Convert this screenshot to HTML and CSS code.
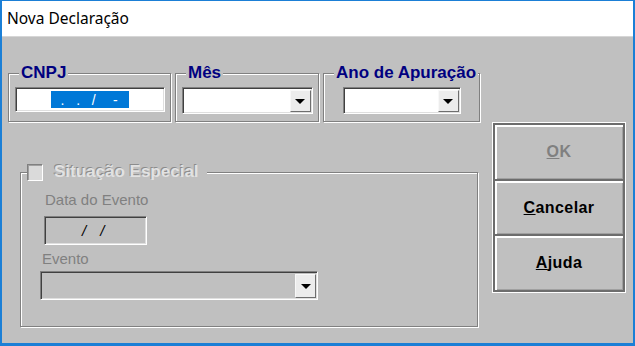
FILE: index.html
```html
<!DOCTYPE html>
<html lang="pt-BR">
<head>
  <meta charset="UTF-8">
  <title>Nova Declaração</title>
  <link rel="stylesheet" href="styles.css">
</head>
<body>
  <div class="window">
    <div class="titlebar">Nova Declaração</div>
    <div class="client">
      <div class="main">
        <div class="top-row">
          <div class="group group-cnpj">
            <span class="group-label">CNPJ</span>
            <div class="field edit cnpj">
              <span class="sel"><i>.</i><i>.</i><i class="slash">/</i><i>-</i></span>
            </div>
          </div>
          <div class="group group-mes">
            <span class="group-label">Mês</span>
            <div class="field combo combo-mes">
              <span class="combo-btn"><span class="arrow"></span></span>
            </div>
          </div>
          <div class="group group-ano">
            <span class="group-label">Ano de Apuração</span>
            <div class="field combo combo-ano">
              <span class="combo-btn"><span class="arrow"></span></span>
            </div>
          </div>
        </div>

        <div class="group group-special">
          <div class="check-label">
            <span class="checkbox"></span>
            <span class="disabled-text">Situação Especial</span>
          </div>
          <div class="caption caption-data">Data do Evento</div>
          <div class="field edit date">/ /</div>
          <div class="caption caption-evento">Evento</div>
          <div class="field combo disabled combo-evento">
            <span class="combo-btn"><span class="arrow"></span></span>
          </div>
        </div>
      </div>

      <div class="buttons">
        <div class="btn btn-disabled"><u>O</u>K</div>
        <div class="btn"><u>C</u>ancelar</div>
        <div class="btn"><u>A</u>juda</div>
      </div>
    </div>
  </div>
</body>
</html>
```

FILE: styles.css
```css
body {
  margin: 0;
  background: #c0c0c0;
}
.window {
  width: 635px;
  height: 346px;
  box-sizing: border-box;
  border: solid #1b7fd6;
  border-width: 1px 2px 3px;
  display: flex;
  flex-direction: column;
  background: #c0c0c0;
}
.titlebar {
  height: 36px;
  box-sizing: border-box;
  background: #fff;
  border-bottom: 1px solid #d6d6d6;
  padding: 6px 0 0 5px;
  font: 15.5px "Noto Sans", sans-serif;
  color: #000;
}
.client {
  flex: 1;
  display: flex;
  padding: 36px 7px 0 6px;
}
.main {
  width: 472px;
}
.top-row {
  display: flex;
  gap: 4px;
}

/* etched group boxes */
.group {
  position: relative;
  box-sizing: border-box;
  border: 1px solid #808080;
  box-shadow: inset 1px 1px 0 #fff, 1px 1px 0 #fff;
}
.top-row .group {
  height: 49px;
  display: flex;
  justify-content: center;
  padding-top: 13px;
}
.group-cnpj { width: 163px; }
.group-mes { width: 144px; }
.group-ano { width: 157px; }
.group-label {
  position: absolute;
  top: -9px;
  left: 10px;
  padding: 0 2px;
  background: #c0c0c0;
  font: bold 17px/16px "Liberation Sans", Arial, sans-serif;
  color: #000080;
  white-space: nowrap;
}

/* sunken fields */
.field {
  box-sizing: border-box;
  border: 1px solid;
  border-color: #808080 #fff #fff #808080;
  box-shadow: inset 1px 1px 0 #404040, inset -1px -1px 0 #dfdfdf;
  background: #fff;
}
.edit.cnpj {
  width: 150px;
  height: 25px;
  display: flex;
  align-items: center;
  padding-left: 35px;
}
.sel {
  display: flex;
  align-items: center;
  width: 78px;
  height: 17px;
  box-sizing: border-box;
  padding-left: 10px;
  background: #0078d7;
  color: #fff;
  font: 14px "Liberation Sans", Arial, sans-serif;
}
.sel i {
  font-style: normal;
  width: 17px;
}
.sel i.slash {
  width: 23px;
}
.combo {
  height: 27px;
  display: flex;
  justify-content: flex-end;
  padding: 2px 1px 1px 2px;
}
.combo-mes { width: 131px; }
.combo-ano { width: 118px; }
.combo-btn {
  width: 21px;
  box-sizing: border-box;
  background: #ececec;
  border: 1px solid;
  border-color: #f8f8f8 #6e6e6e #6e6e6e #f8f8f8;
  display: flex;
  align-items: center;
  justify-content: center;
}
.arrow {
  width: 0;
  height: 0;
  border-left: 5px solid transparent;
  border-right: 5px solid transparent;
  border-top: 5px solid #000;
}

/* Situação Especial */
.group-special {
  width: 458px;
  height: 155px;
  margin: 50px 0 0 12px;
  padding: 18px 0 0 0;
}
.check-label {
  position: absolute;
  top: -10px;
  left: 6px;
  display: flex;
  align-items: center;
  gap: 11px;
  padding-right: 8px;
  background: #c0c0c0;
}
.checkbox {
  width: 16px;
  height: 17px;
  box-sizing: border-box;
  border: 1px solid;
  border-color: #808080 #fff #fff #808080;
  box-shadow: inset 1px 1px 0 #a0a0a0;
  background: #dadada;
}
.disabled-text {
  font: bold 17px/18px "Liberation Sans", Arial, sans-serif;
  color: #e2e2e2;
  text-shadow: -1px -1px 0 #8c8c8c;
}
.caption {
  font: 15px/17px "Liberation Sans", Arial, sans-serif;
  color: #808080;
}
.caption-data {
  margin-left: 24px;
}
.edit.date {
  width: 103px;
  height: 29px;
  margin: 8px 0 0 23px;
  padding-left: 37px;
  background: #c0c0c0;
  font: italic 15px/27px "Liberation Sans", Arial, sans-serif;
  letter-spacing: 5px;
  color: #000;
}
.caption-evento {
  margin: 5px 0 0 21px;
}
.combo-evento {
  width: 278px;
  height: 29px;
  margin: 4px 0 0 19px;
  background: #c0c0c0;
}

/* command buttons */
.buttons {
  width: 135px;
  height: 171px;
  box-sizing: border-box;
  margin: 49px 0 0 12px;
  border: 1px solid #fff;
  display: flex;
  flex-direction: column;
}
.btn {
  flex: 1;
  display: flex;
  align-items: center;
  justify-content: center;
  border: 2px solid #6d6d6d;
  box-shadow: inset 2px 2px 0 #fff, inset -1px -1px 0 #a0a0a0;
  font: bold 16px "Liberation Sans", Arial, sans-serif;
  letter-spacing: 0.4px;
  color: #000;
}
.btn + .btn {
  margin-top: -2px;
}
.btn-disabled {
  color: #808080;
}
```
